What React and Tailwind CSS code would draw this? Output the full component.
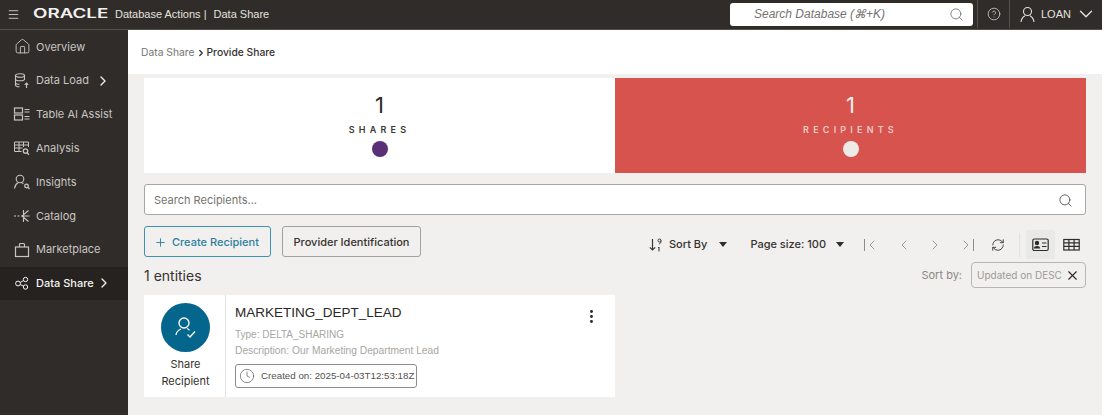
import React from "react";
import { ChevronDown, ChevronLeft, ChevronRight, Clock, EllipsisVertical, House, Menu, Plus, RefreshCw, Search, X, CircleHelp } from "lucide-react";

const FONT = "font-['Inter','Liberation_Sans',sans-serif]";

const DataLoadIcon = () => (
  <svg width="18" height="18" viewBox="0 0 18 18" fill="none" stroke="currentColor" strokeWidth="1.1">
    <ellipse cx="7" cy="3.5" rx="4.5" ry="1.8" />
    <path d="M2.5 3.5V13c0 1 2 1.8 4 1.8M11.5 3.5V8M2.5 7c0 1 2 1.8 4.500 1.800s4.500-.8 4.500-1.800M2.500 10.500c0 1 2 1.800 4 1.800" />
    <path d="M13.500 16v-5M11.700 12.800l1.800-1.800 1.800 1.800" />
  </svg>
);

const TableAiIcon = () => (
  <svg width="18" height="18" viewBox="0 0 18 18" fill="none" stroke="currentColor" strokeWidth="1.2">
    <rect x="1.500" y="3" width="8" height="5" />
    <rect x="1.500" y="10" width="8" height="5" />
    <path d="M11.500 4.500h5M11.500 7h5M11.500 11.500h5M11.500 14h5" />
  </svg>
);

const AnalysisIcon = () => (
  <svg width="18" height="18" viewBox="0 0 18 18" fill="none" stroke="currentColor" strokeWidth="1">
    <path d="M1.500 3h14v5M1.500 3v9.500h7M1.500 6h14M1.500 9h8M6 3v9.500M10.500 3v5" />
    <circle cx="12.500" cy="12" r="2.200" strokeWidth="1.300" />
    <path d="M14 13.700l2 2" strokeWidth="1.300" />
  </svg>
);

const InsightsIcon = () => (
  <svg width="18" height="18" viewBox="0 0 18 18" fill="none" stroke="currentColor" strokeWidth="1.1">
    <circle cx="7" cy="6" r="3.800" />
    <path d="M1.500 15.500c.5-3 2-5 3.500-5.800M9 9.700c.5.300 1 .7 1.300 1.100" />
    <circle cx="13.500" cy="13" r="1.800" strokeWidth="1.300" />
    <path d="M15 14.500l1.500 1.500" strokeWidth="1.300" />
  </svg>
);

const CatalogIcon = () => (
  <svg width="18" height="18" viewBox="0 0 18 18" fill="none" stroke="currentColor" strokeWidth="1.1">
    <path d="M1 9h2M4.500 9h2M8 9h8.500M15.500 3.500L9 9l6.500 5.500M10.500 3v12" />
  </svg>
);

const MarketplaceIcon = () => (
  <svg width="18" height="18" viewBox="0 0 18 18" fill="none" stroke="currentColor" strokeWidth="1.2">
    <rect x="2.500" y="6" width="13" height="9.500" />
    <path d="M6.500 6V3.500c0-.6.400-1 1-1h3c.6 0 1 .4 1 1V6" />
  </svg>
);

const DataShareIcon = () => (
  <svg width="18" height="18" viewBox="0 0 18 18" fill="none" stroke="currentColor" strokeWidth="1">
    <circle cx="5" cy="9.500" r="2.400" />
    <circle cx="12.500" cy="5.500" r="2.200" />
    <circle cx="12.500" cy="13" r="2.200" />
    <path d="M7.200 8.400l3.300-1.800M7.200 10.600l3.300 1.500" />
  </svg>
);

const UserIcon = () => (
  <svg width="17" height="17" viewBox="0 0 17 17" fill="none" stroke="currentColor" strokeWidth="1.100">
    <circle cx="8.500" cy="5.500" r="4" />
    <path d="M2 16c.3-3 2.200-5.300 4-6.300M11 9.700c1.800 1 3.700 3.300 4 6.300" />
  </svg>
);

const SortIcon = () => (
  <svg width="16" height="16" viewBox="0 0 16 16" fill="none" stroke="#3a3835" strokeWidth="1.200">
    <path d="M4.500 2v11M1.800 10.300l2.700 2.700 2.700-2.700" />
    <circle cx="11.500" cy="3.500" r="1.500" strokeWidth="1" />
    <path d="M13 3.500c0 2-.5 3-1.800 3.500M11 10v4.500M10 11l1-1" strokeWidth="1" />
  </svg>
);

const Caret = () => <span className="w-0 h-0 border-x-[4.500px] border-x-transparent border-t-[5px] border-t-[#2f2d2a]" />;

const CardViewIcon = () => (
  <svg width="17" height="14" viewBox="0 0 17 14" fill="none" stroke="#2f2d2a" strokeWidth="1.200">
    <rect x="0.800" y="1" width="15.400" height="11.500" rx="1.500" />
    <circle cx="5" cy="5" r="1.600" fill="#2f2d2a" />
    <path d="M2.500 10c.2-2 4.800-2 5 0z" fill="#2f2d2a" />
    <path d="M10 5h4.500M10 8.500h4.500" />
  </svg>
);

const TableViewIcon = () => (
  <svg width="17" height="14" viewBox="0 0 17 14" fill="none" stroke="#2f2d2a" strokeWidth="1.200">
    <rect x="0.800" y="1.500" width="15.400" height="10.500" />
    <path d="M0.800 4.800h15.400M0.800 8.400h15.400M5.900 1.500V12M11.100 1.500V12" />
  </svg>
);

const NAV = [
  { label: "Overview", icon: <House size={17} strokeWidth={1.300} /> },
  { label: "Data Load", icon: <DataLoadIcon />, more: "ml-px" },
  { label: "Table AI Assist", icon: <TableAiIcon /> },
  { label: "Analysis", icon: <AnalysisIcon /> },
  { label: "Insights", icon: <InsightsIcon /> },
  { label: "Catalog", icon: <CatalogIcon /> },
  { label: "Marketplace", icon: <MarketplaceIcon /> },
  { label: "Data Share", icon: <DataShareIcon />, more: "-ml-[3px]", active: true },
];

const Sidebar = () => (
  <aside className="w-[128px] shrink-0 bg-[#302c29]">
    {NAV.map((item) => (
      <div
        key={item.label}
        className={`h-[33.800px] flex items-center pl-[13px] gap-[5px] text-[11px] ${item.active ? "bg-[#252220] text-[#f5f4f2] font-medium" : "text-[#c9c6c2]"}`}
      >
        <span className="w-[18px] flex justify-center">{item.icon}</span>
        <span>{item.label}</span>
        {item.more && <ChevronRight size={16} strokeWidth={2} className={`${item.more} text-[#eeeeee]`} />}
      </div>
    ))}
  </aside>
);

const Header = () => (
  <header className="h-[30px] shrink-0 bg-[#302c29] border-b border-[#55514d] flex items-center pb-px text-[#e4e2df]">
    <Menu size={13} strokeWidth={1.500} className="ml-[7px]" />
    <span className="ml-[13px] w-[76px] text-[12.500px] font-semibold text-[#f4f2f0] leading-none scale-x-[1.500] origin-left">ORACLE</span>
    <span className="ml-[6px] text-[11px] font-['Liberation_Sans',sans-serif]">Database Actions |</span>
    <span className="ml-[7px] text-[11px] font-['Liberation_Sans',sans-serif]">Data Share</span>
    <div className="ml-auto w-[243px] h-[23px] bg-white rounded-[3px] flex items-center pl-[24px] pr-[9px] text-[#757270] text-[12px] italic font-['Liberation_Sans',sans-serif]">
      <span>Search Database (⌘+K)</span>
      <Search size={15} strokeWidth={1.100} className="ml-auto text-[#55524f]" />
    </div>
    <div className="ml-[4px] w-[33px] h-full border-x border-[#55514d] flex items-center justify-center">
      <CircleHelp size={14} strokeWidth={1.200} />
    </div>
    <div className="w-[92px] flex items-center pl-[9px] text-[11px] font-['Liberation_Sans',sans-serif]">
      <UserIcon />
      <span className="ml-[5px]">LOAN</span>
      <ChevronDown size={22} strokeWidth={1.500} className="ml-[4px]" />
    </div>
  </header>
);

const StatCard = ({ value, label, dot, className, labelClass }) => (
  <div className={`flex-1 h-full flex flex-col items-center ${className}`}>
    <div className="mt-[13px] text-[22px] leading-[28px]">{value}</div>
    <div className={`mt-[5px] text-[9px] leading-[11px] font-semibold tracking-[4.200px] ${labelClass}`}>{label}</div>
    <div className={`mt-[6px] w-[16px] h-[16px] rounded-full ${dot}`} />
  </div>
);

const Toolbar = () => (
  <div className="ml-auto mt-[4px] flex items-center text-[#35322f] text-[11px] font-medium">
    <SortIcon />
    <span className="ml-[5px]">Sort By</span>
    <span className="ml-[12px] flex"><Caret /></span>
    <span className="ml-[23px]">Page size: 100</span>
    <span className="ml-[10px] flex"><Caret /></span>
    <div className="ml-[20px] flex items-center text-[#8f8c88]">
      <span className="w-px h-[12px] bg-[#8f8c88]" />
      <ChevronLeft size={16} strokeWidth={1.300} className="-ml-px" />
      <ChevronLeft size={16} strokeWidth={1.300} className="ml-[16px]" />
      <ChevronRight size={16} strokeWidth={1.300} className="ml-[15px]" />
      <ChevronRight size={16} strokeWidth={1.300} className="ml-[15px]" />
      <span className="w-px h-[12px] bg-[#8f8c88] -ml-px" />
    </div>
    <RefreshCw size={14} strokeWidth={1.500} className="ml-[17px] text-[#35322f]" />
    <span className="ml-[14px] w-px h-[24px] bg-[#e3e1de]" />
    <div className="ml-[6px] w-[29px] h-[29px] bg-[#e9e9e7] flex items-center justify-center"><CardViewIcon /></div>
    <div className="ml-[2px] w-[29px] h-[29px] flex items-center justify-center"><TableViewIcon /></div>
  </div>
);

const RecipientCard = () => (
  <div className="w-[471px] h-[102px] bg-white flex">
    <div className="w-[82px] shrink-0 border-r border-[#e4e2df] flex flex-col items-center pt-[8px] pl-[2px]">
      <div className="w-[49px] h-[49px] rounded-full bg-[#04668c] flex items-center justify-center text-white">
        <svg width="28" height="28" viewBox="0 0 28 28" fill="none" stroke="currentColor" strokeWidth="1.300">
          <circle cx="12" cy="9" r="5" />
          <path d="M4 21c.3-3 2.500-5 5-6M15 14.500c1 .4 2 1 2.500 1.800" />
          <path d="M15.500 20.500l2.500 2.500 5-5.500" />
        </svg>
      </div>
      <div className="mt-[4px] text-[11px] leading-[17px] text-center text-[#35322f]">Share<br />Recipient</div>
    </div>
    <div className="flex-1 pl-[9px] pt-[8px] relative font-['Liberation_Sans',sans-serif]">
      <div className="text-[13.500px] leading-[20px] text-[#2b2927]">MARKETING_DEPT_LEAD</div>
      <div className="mt-[4px] text-[10px] leading-[15px] text-[#a8a6a3]">Type: DELTA_SHARING</div>
      <div className="text-[10.250px] leading-[15px] mt-px text-[#a8a6a3]">Description: Our Marketing Department Lead</div>
      <div className="mt-[6px] w-[182px] h-[24px] border border-[#8f8d8a] rounded-[3px] flex items-center pl-[3px] text-[9.750px] text-[#55524f] whitespace-nowrap">
        <Clock size={16} strokeWidth={1} className="shrink-0" />
        <span className="ml-[6px]">Created on: 2025-04-03T12:53:18Z</span>
      </div>
      <EllipsisVertical size={17} strokeWidth={2.200} className="absolute right-[15px] top-[13px] text-[#2b2927]" />
    </div>
  </div>
);

export default function App() {
  return (
    <div className={`w-[1106px] h-[418px] bg-white overflow-hidden ${FONT}`}>
      <div className="w-[1102px] h-[415px] flex flex-col">
        <Header />
        <div className="flex flex-1 min-h-0">
          <Sidebar />
          <main className="flex-1 min-w-0 bg-[#f1f0ee] flex flex-col">
            <div className="h-[44px] shrink-0 bg-white flex items-center pl-[13px] pt-px text-[10.300px]">
              <span className="text-[#787572]">Data Share</span>
              <ChevronRight size={10} strokeWidth={3} className="mx-px text-[#2f2d2a]" />
              <span className="text-[#35322f] font-medium">Provide Share</span>
            </div>
            <div className="px-[16px] pt-[4px]">
              <div className="h-[95px] flex">
                <StatCard value="1" label="SHARES" dot="bg-[#5b2f75]" className="bg-white text-[#2b2927]" labelClass="text-[#3a3835]" />
                <StatCard value="1" label="RECIPIENTS" dot="bg-[#eeeae6]" className="bg-[#d6534e] text-[#f4eeeb]" labelClass="text-[#f0c9c6]" />
              </div>
              <div className="mt-[11px] h-[31px] bg-white border border-[#a9a7a4] rounded-[3px] flex items-center pl-[9px] pr-[12px] pt-px text-[11px] text-[#767370]">
                <span>Search Recipients...</span>
                <Search size={15} strokeWidth={1.300} className="ml-auto text-[#45423f]" />
              </div>
              <div className="mt-[11px] flex items-start">
                <button className="w-[127px] h-[31px] border border-[#3f92ad] rounded-[3px] flex items-center pl-[9px] pt-px text-[11px] font-medium text-[#2c7f9f]">
                  <Plus size={13} strokeWidth={1.700} />
                  <span className="ml-[5px]">Create Recipient</span>
                </button>
                <button className="ml-[11px] w-[139px] h-[31px] border border-[#a3a09d] rounded-[3px] flex items-center justify-center pt-px text-[11px] font-medium text-[#35322f]">
                  Provider Identification
                </button>
                <Toolbar />
              </div>
              <div className="mt-[3px] h-[26px] flex items-center">
                <span className="text-[14px] text-[#35322f] pt-px">1 entities</span>
                <span className="ml-auto text-[11px] text-[#8b8885]">Sort by:</span>
                <div className="ml-[9px] w-[115px] h-[26px] border border-[#b8b6b3] rounded-[4px] flex items-center pl-[5px] text-[10px] text-[#9c9a97] whitespace-nowrap">
                  Updated on DESC
                  <X size={15} strokeWidth={1.800} className="ml-auto mr-[5px] text-[#2b2927]" />
                </div>
              </div>
              <div className="mt-[7px]">
                <RecipientCard />
              </div>
            </div>
          </main>
        </div>
      </div>
    </div>
  );
}
